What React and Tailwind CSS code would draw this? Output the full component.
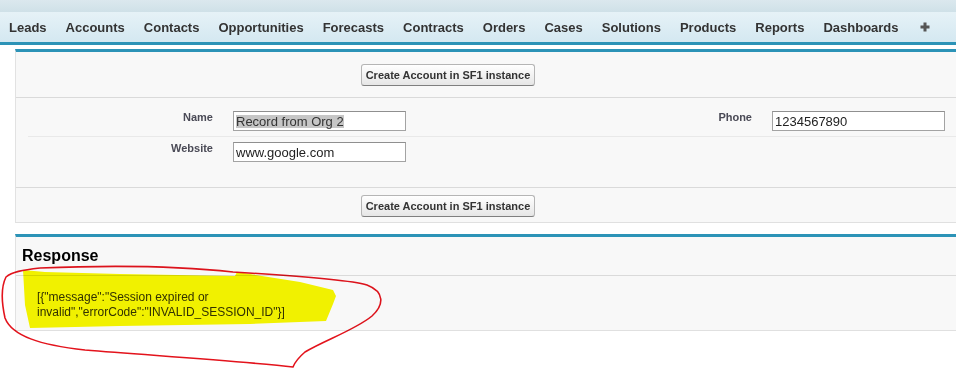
import React from "react";

const tabs = [
  "Leads",
  "Accounts",
  "Contacts",
  "Opportunities",
  "Forecasts",
  "Contracts",
  "Orders",
  "Cases",
  "Solutions",
  "Products",
  "Reports",
  "Dashboards",
];

function SfButton({ children }) {
  return (
    <button className="h-[22px] px-[4px] rounded-[3px] border border-[#b5b5b5] border-b-[#7f7f7f] bg-gradient-to-b from-white to-[#e6e6e6] text-[11px] font-bold text-[#333] leading-none">
      {children}
    </button>
  );
}

function FakeInput({ children }) {
  return (
    <div className="w-[173px] h-[20px] bg-white border border-[#a3a3a3] border-t-[#8f8f8f] flex items-center pl-[2px] text-[13px] text-[#222] leading-none whitespace-nowrap">
      {children}
    </div>
  );
}

function Label({ children }) {
  return (
    <div className="w-[195px] pr-[10px] text-right text-[11px] font-bold text-[#4a4a56] leading-[13px]">
      {children}
    </div>
  );
}

export default function App() {
  return (
    <div
      className="relative w-[956px] h-[368px] overflow-hidden bg-white"
      style={{ fontFamily: '"Liberation Sans", Arial, sans-serif' }}
    >
      {/* tab bar */}
      <div className="h-[12px] bg-gradient-to-b from-[#dbe8ee] to-[#cfe1e8]" />
      <div className="h-[33px] border-b-[3px] border-[#2c93b7] bg-gradient-to-b from-[#e6f2f7] to-[#d4e8f1] flex items-center pl-[9px] gap-[19px]">
        {tabs.map((t) => (
          <span key={t} className="text-[13px] font-bold text-[#333] leading-none">
            {t}
          </span>
        ))}
        <svg width="10" height="10" viewBox="0 0 10 10" className="ml-[2px]">
          <rect x="3.5" y="0.5" width="3" height="9" fill="#555" />
          <rect x="0.5" y="3.5" width="9" height="3" fill="#555" />
        </svg>
      </div>

      {/* account form block */}
      <div className="ml-[15px] mt-[4px] border-t-[3px] border-[#2c93b7] border-l border-l-[#e2e2e2] border-b border-b-[#e0e0e0] bg-[#f8f8f8]">
        <div className="pt-[12px] pb-[11px]">
          <div className="w-[864px] flex justify-center">
            <SfButton>Create Account in SF1 instance</SfButton>
          </div>
        </div>
        <div className="border-t border-[#dadada] pt-[8px] pb-[20px]">
          <div className="ml-[12px] flex py-[5px] border-b border-[#e9e9e9]">
            <Label>Name</Label>
            <div className="w-[344px] pl-[10px]">
              <FakeInput>
                <span className="bg-[#c6c6c6] text-[#333]">Record from Org 2</span>
              </FakeInput>
            </div>
            <Label>Phone</Label>
            <div className="pl-[10px]">
              <FakeInput>1234567890</FakeInput>
            </div>
          </div>
          <div className="ml-[12px] flex py-[5px]">
            <Label>Website</Label>
            <div className="w-[344px] pl-[10px]">
              <FakeInput>www.google.com</FakeInput>
            </div>
          </div>
        </div>
        <div className="border-t border-[#dadada] pt-[7px] pb-[5px]">
          <div className="w-[864px] flex justify-center">
            <SfButton>Create Account in SF1 instance</SfButton>
          </div>
        </div>
      </div>

      {/* response block */}
      <div className="ml-[15px] mt-[11px] border-t-[3px] border-[#2c93b7] border-l border-l-[#e2e2e2] border-b border-b-[#e0e0e0] bg-[#f8f8f8]">
        <div className="h-[39px] flex items-center pl-[6px] border-b border-[#dadada]">
          <h2 className="text-[16px] font-bold text-black leading-none">Response</h2>
        </div>
        <div className="pl-[21px] pt-[14px] pb-[10px]">
          <p className="w-[260px] text-[12px] leading-[15px] text-[#333]">
            [{"{"}"message":"Session expired or invalid","errorCode":"INVALID_SESSION_ID"{"}"}]
          </p>
        </div>
      </div>

      {/* marker annotations over the response */}
      <svg
        className="absolute left-0 top-0 pointer-events-none mix-blend-multiply"
        width="956"
        height="368"
        viewBox="0 0 956 368"
      >
        <path
          d="M23 270 L45 272 L120 274 L235 276 L237 272 L250 274 L300 282 L333 290 L336 296 L333 304 L326 321 L250 324 L120 326 L30 328 L25 305 Z"
          fill="#f8f800"
        />
        <path
          d="M40 268 C90 266 160 264 233 272 C300 276 350 280 367 285 C385 292 384 305 372 316 C355 330 325 340 305 352 C298 358 295 362 293 367 C250 362 160 356 85 350 C40 345 12 336 5 318 C1 300 2 285 6 277 C12 272 22 270 40 268"
          fill="none"
          stroke="#e3131c"
          strokeWidth="1.6"
          strokeLinejoin="round"
        />
      </svg>
    </div>
  );
}
